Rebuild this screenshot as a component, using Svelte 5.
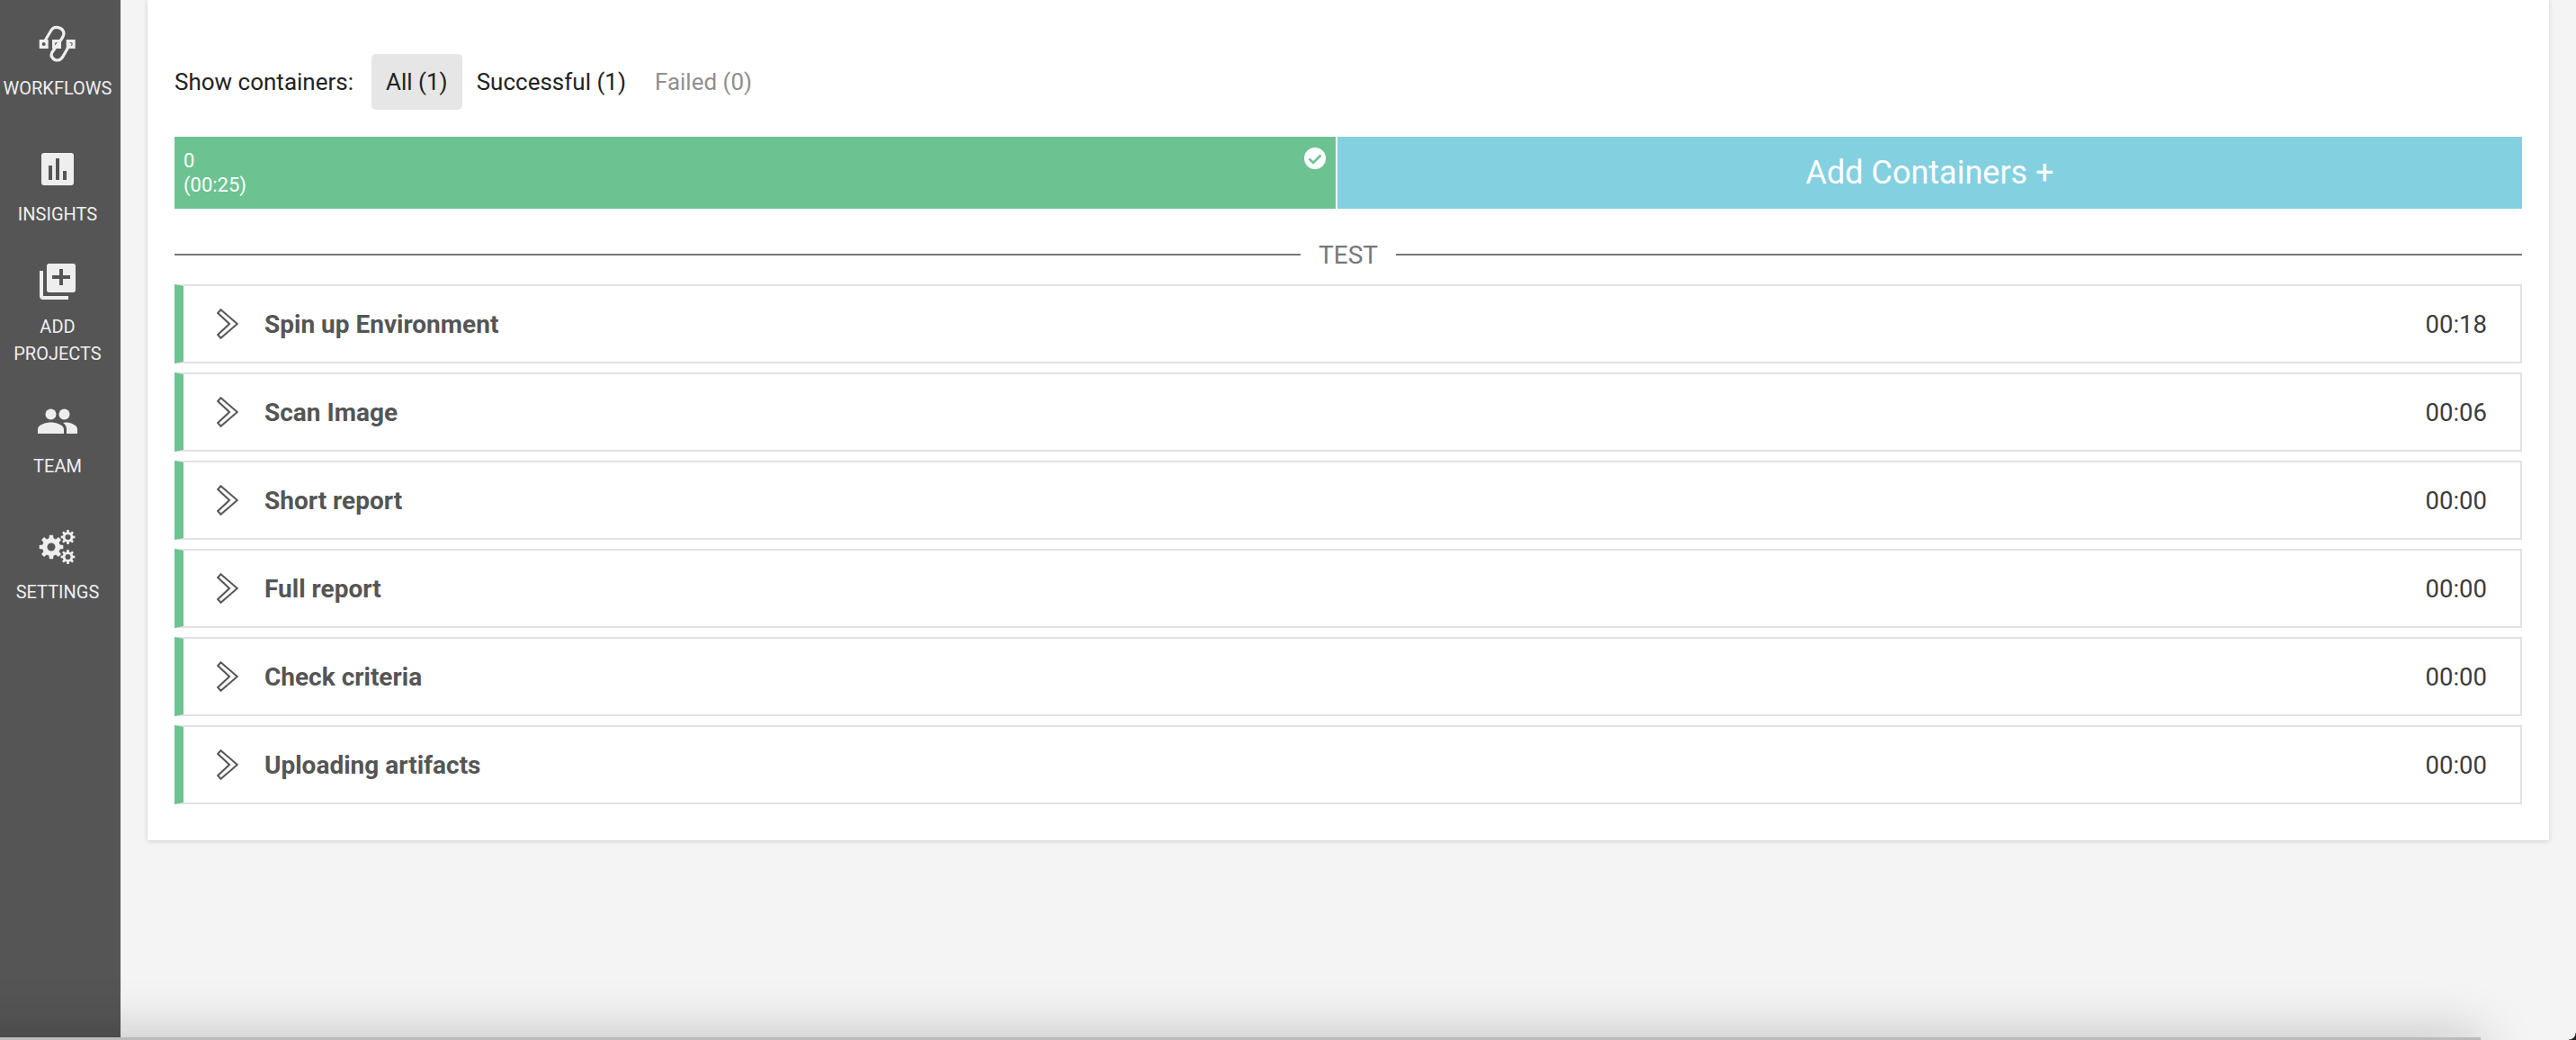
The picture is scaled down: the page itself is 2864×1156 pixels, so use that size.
<script>
  const filters = [
    { label: "All (1)", active: true },
    { label: "Successful (1)" },
    { label: "Failed (0)", muted: true },
  ];

  const steps = [
    { name: "Spin up Environment", time: "00:18" },
    { name: "Scan Image", time: "00:06" },
    { name: "Short report", time: "00:00" },
    { name: "Full report", time: "00:00" },
    { name: "Check criteria", time: "00:00" },
    { name: "Uploading artifacts", time: "00:00" },
  ];

  // builds a cog outline, the hole comes from fill-rule evenodd
  function gear(cx, cy, outer, inner, hole, teeth) {
    let d = "";
    const step = (Math.PI * 2) / teeth;
    for (let i = 0; i < teeth; i++) {
      const a = i * step;
      const pts = [
        [inner, a - step * 0.32],
        [outer, a - step * 0.2],
        [outer, a + step * 0.2],
        [inner, a + step * 0.32],
      ];
      for (const [r, t] of pts) {
        d += (d ? "L" : "M") + (cx + r * Math.cos(t)).toFixed(2) + " " + (cy + r * Math.sin(t)).toFixed(2);
      }
    }
    d += `ZM${cx - hole} ${cy}a${hole} ${hole} 0 1 0 ${hole * 2} 0a${hole} ${hole} 0 1 0 ${-hole * 2} 0Z`;
    return d;
  }
</script>

<div class="page">
  <nav class="sidebar">
    <a class="nav-item">
      <svg class="icon" width="44" height="44" viewBox="0 0 44 44">
        <path class="loop" d="M7 21 15 7.500C18 2.500 28 3.500 29 11 29 13 28 15 27 16.500L16 32C13 37 18 41 22 41 26 41 27.500 38 29 35L36.500 22" />
        <path class="dots" fill-rule="evenodd" d="M1.700 18h10v10h-10zM4.700 23a2 2 0 1 0 4 0a2 2 0 1 0-4 0ZM16 18h10v10H16zM19 23a2 2 0 1 0 4 0a2 2 0 1 0-4 0ZM31.700 18h10v10h-10zM34.700 23a2 2 0 1 0 4 0a2 2 0 1 0-4 0Z" />
      </svg>
      <span>WORKFLOWS</span>
    </a>
    <a class="nav-item">
      <svg class="icon" width="44" height="44" viewBox="0 0 44 44">
        <path fill-rule="evenodd" d="M7 4h30a3 3 0 0 1 3 3v30a3 3 0 0 1-3 3H7a3 3 0 0 1-3-3V7a3 3 0 0 1 3-3ZM12 18v16h4V18ZM20 10v24h4V10ZM28 24v10h4V24Z" />
      </svg>
      <span>INSIGHTS</span>
    </a>
    <a class="nav-item">
      <svg class="icon" width="44" height="44" viewBox="0 0 44 44">
        <path fill-rule="evenodd" d="M2 10h4v28h28v4H6a4 4 0 0 1-4-4ZM12 2h28a2.500 2.500 0 0 1 2 2v28a2.500 2.500 0 0 1-2 2H12a2.500 2.500 0 0 1-2-2V4a2.500 2.500 0 0 1 2-2ZM24 8v7H16v4h8v7h4v-7h8v-4H28V8Z" />
      </svg>
      <span>ADD<br />PROJECTS</span>
    </a>
    <a class="nav-item">
      <svg class="icon" width="44" height="44" viewBox="0 0 44 44">
        <circle cx="14.500" cy="14.500" r="6" />
        <circle cx="29.500" cy="14.500" r="6" />
        <path d="M0 36v-5c0-5 9-7.500 14.500-7.500S29 26 29 31v5ZM32 36v-5c0-3-1.500-5.500-4-7 1-.3 2-.5 3-.5 5 0 13 2.500 13 7.500v5Z" />
      </svg>
      <span>TEAM</span>
    </a>
    <a class="nav-item">
      <svg class="icon" width="44" height="44" viewBox="0 0 44 44">
        <path fill-rule="evenodd" d={gear(15, 22, 13.5, 10, 4.5, 8)} />
        <path fill-rule="evenodd" d={gear(33.500, 11, 8, 5.800, 3, 8)} />
        <path fill-rule="evenodd" d={gear(33.500, 33, 8, 5.800, 3, 8)} />
      </svg>
      <span>SETTINGS</span>
    </a>
  </nav>

  <main class="content">
    <section class="card">
      <div class="filter-row">
        <span class="filter-label">Show containers:</span>
        {#each filters as f}
          <button class="filter" class:active={f.active} class:muted={f.muted}>{f.label}</button>
        {/each}
      </div>

      <div class="bar">
        <div class="bar-done">
          <div class="bar-text">0<br />(00:25)</div>
          <svg class="bar-check" width="24" height="24" viewBox="0 0 24 24">
            <circle cx="12" cy="12" r="12" fill="#fff" />
            <path d="M5.500 12.500 10 17 18.500 8.500" fill="none" stroke="#6cc391" stroke-width="2.600" />
          </svg>
        </div>
        <div class="bar-add">Add Containers +</div>
      </div>

      <div class="divider"><i></i><span>TEST</span><i></i></div>

      <ul class="steps">
        {#each steps as s}
          <li class="step">
            <svg class="chevron" width="24" height="34" viewBox="0 0 24 34">
              <path d="M4.500 1.200 22.800 17 4.500 32.800 1.200 29 14 17 1.200 5Z" />
            </svg>
            <span class="step-name">{s.name}</span>
            <span class="step-time">{s.time}</span>
          </li>
        {/each}
      </ul>
    </section>
  </main>

  <div class="window-edge"></div>
  <div class="window-corner"></div>
</div>

<style>
  :global(body) {
    margin: 0;
    background: #f4f4f4;
  }

  .page {
    position: relative;
    display: flex;
    height: 1156px;
    overflow: hidden;
    font-family: Roboto, "Liberation Sans", sans-serif;
    background: #f4f4f4;
  }

  .sidebar {
    box-sizing: border-box;
    flex: 0 0 134px;
    margin-top: -1px;
    padding-right: 6px;
    background: #555;
    color: #eee;
  }

  .nav-item {
    display: flex;
    flex-direction: column;
    align-items: center;
    justify-content: center;
    height: 140px;
    font-size: 20px;
    line-height: 30px;
    text-align: center;
  }

  .icon {
    margin-bottom: 13px;
    fill: #eee;
  }

  .loop {
    fill: none;
    stroke: #eee;
    stroke-width: 3.200;
  }

  .content {
    flex: 1;
    padding: 0 30px 0 30px;
  }

  .card {
    padding: 60px 30px 40px;
    background: #fff;
    box-shadow: 0 1px 5px rgba(0, 0, 0, 0.16);
  }

  .filter-row {
    display: flex;
    align-items: center;
    height: 62px;
    margin-bottom: 30px;
    font-size: 26px;
    color: #222;
  }

  .filter-label {
    margin-right: 20px;
  }

  .filter {
    height: 62px;
    padding: 0 16px;
    border: 0;
    border-radius: 5px;
    background: none;
    font: inherit;
    color: inherit;
  }

  .filter.active {
    background: #e6e6e6;
  }

  .filter.muted {
    color: #8f8f8f;
  }

  .bar {
    display: flex;
    gap: 2px;
    height: 80px;
    color: #fff;
  }

  .bar-done {
    position: relative;
    flex: 1291;
    background: #6cc391;
  }

  .bar-text {
    padding: 13px 10px;
    font-size: 22px;
    line-height: 27px;
  }

  .bar-check {
    position: absolute;
    top: 12px;
    right: 11px;
  }

  .bar-add {
    flex: 1317;
    background: #83d0e0;
    font-size: 36px;
    line-height: 80px;
    text-align: center;
  }

  .divider {
    display: flex;
    align-items: center;
    gap: 20px;
    height: 30px;
    margin: 36px 0 18px;
    font-size: 28px;
    color: #777;
  }

  .divider i {
    flex: 1;
    height: 2px;
    background: #777;
  }

  .steps {
    display: flex;
    flex-direction: column;
    gap: 10px;
    margin: 0;
    padding: 0;
    list-style: none;
  }

  .step {
    display: flex;
    align-items: center;
    box-sizing: border-box;
    height: 88px;
    padding: 0 37px;
    border: 2px solid #e2e2e2;
    border-left: 10px solid #6cc391;
  }

  .chevron {
    margin-right: 29px;
    fill: #f9f9f9;
    stroke: #555;
    stroke-width: 2;
  }

  .step-name {
    flex: 1;
    font-size: 28px;
    font-weight: 700;
    color: #555;
  }

  .step-time {
    font-size: 27.500px;
    color: #3c3c3c;
  }

  .window-edge {
    position: absolute;
    top: 1153px;
    left: -100px;
    right: 106px;
    height: 40px;
    background: #bbb;
    box-shadow: 0 0 60px rgba(0, 0, 0, 0.26);
  }

  .window-corner {
    position: absolute;
    right: 0;
    bottom: 0;
    width: 8px;
    height: 8px;
    background: radial-gradient(circle at 0 0, transparent 7px, #222 8px);
  }
</style>
